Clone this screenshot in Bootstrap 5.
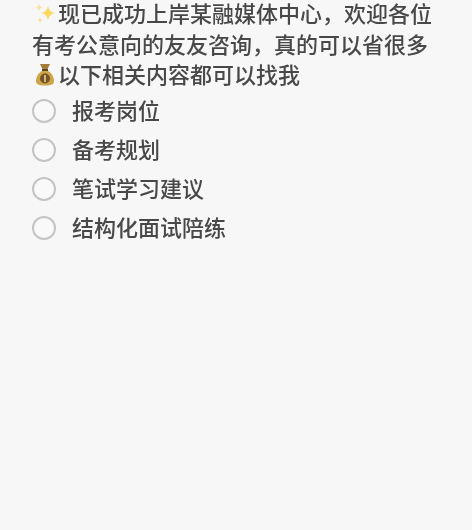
<!DOCTYPE html>
<html lang="zh"><head><meta charset="utf-8">
<link href="https://cdn.jsdelivr.net/npm/bootstrap@5.3.0/dist/css/bootstrap.min.css" rel="stylesheet">
<style>
html,body{background:#f7f7f7;height:100%}
body{font-family:"Liberation Sans","Noto Sans CJK SC",sans-serif;color:#484848;font-weight:500}
.page-wrap{padding:0 34px 0 32px;filter:blur(.6px)}
.intro{font-size:22px;line-height:30.5px;margin:0}
.emo{width:22px;height:24px;margin:0 2px;vertical-align:-4px}
.opt-row{height:39px;gap:16px;font-size:22px}
.opt-ring{width:24px;height:24px;border:2px solid #c4c4c4;border-radius:50%;background:#f9f9f9;flex:none}
</style></head><body>
<div class="page-wrap">
<p class="intro"><svg class="emo" viewBox="0 0 22 24"><path d="M14 4q1 6 7 7q-6 1-7 7q-1-6-7-7q6-1 7-7z" fill="#f8d85f"/><path d="M5 2q.5 3 3 3.500q-2.500.5-3 3.500q-.5-3-3-3.500q2.500-.5 3-3.500zM6 15q.4 2.800 2.500 3.300q-2.100.5-2.500 3.300q-.4-2.800-2.500-3.300q2.100-.5 2.500-3.300z" fill="#f8e2a4"/></svg>现已成功上岸某融媒体中心，欢迎各位有考公意向的友友咨询，真的可以省很多<svg class="emo" viewBox="0 0 22 24"><path d="M6 1h10l-2.500 5h-5z" fill="#a47a36"/><path d="M8.500 7.500h5C18.500 10.500 20 15 20 18c0 3.500-3 4.500-9 4.500s-9-1-9-4.500c0-3 1.500-7.500 6.500-10.500z" fill="#cfa54a"/><rect x="8" y="6" width="6" height="2" fill="#5f4720"/><circle cx="11" cy="15.500" r="5" fill="#745626"/><rect x="10.200" y="12" width="1.600" height="7" fill="#e6cf94"/></svg>以下相关内容都可以找我</p>
<div class="d-flex flex-column">
<div class="d-flex align-items-center opt-row"><span class="opt-ring"></span><span>报考岗位</span></div>
<div class="d-flex align-items-center opt-row"><span class="opt-ring"></span><span>备考规划</span></div>
<div class="d-flex align-items-center opt-row"><span class="opt-ring"></span><span>笔试学习建议</span></div>
<div class="d-flex align-items-center opt-row"><span class="opt-ring"></span><span>结构化面试陪练</span></div>
</div></div>
<script src="https://cdn.jsdelivr.net/npm/bootstrap@5.3.0/dist/js/bootstrap.bundle.min.js"></script>
</body></html>
